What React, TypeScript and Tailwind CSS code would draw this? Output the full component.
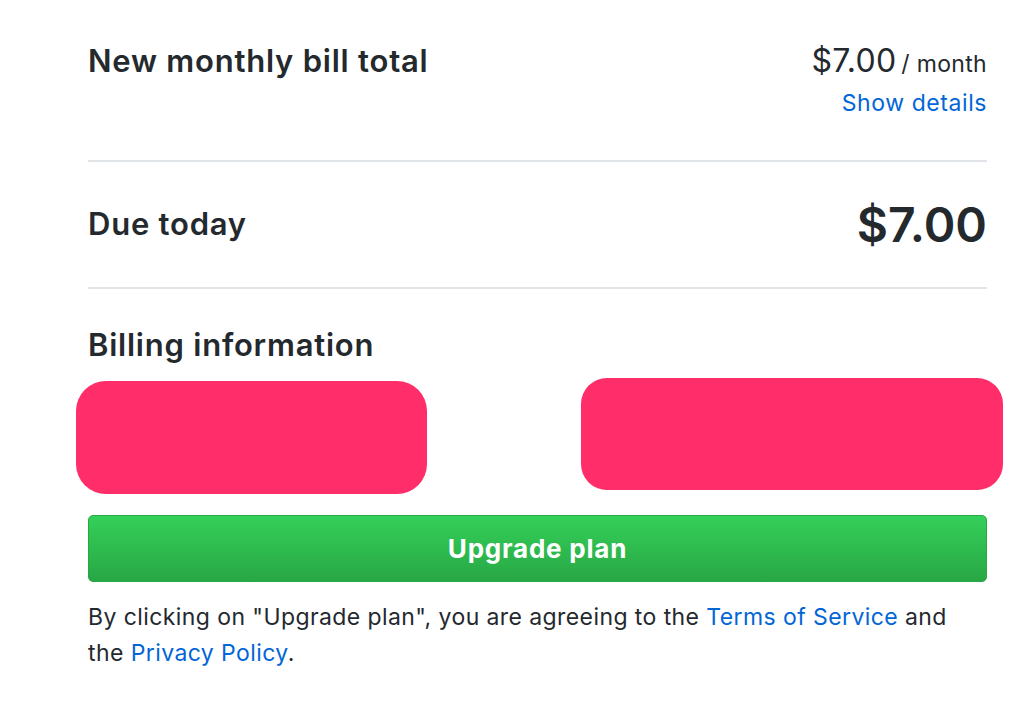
export default function App() {
  return (
    <div
      className="min-h-[726px] w-[1026px] bg-white text-[#24292e]"
      style={{ fontFamily: "Inter, 'Noto Sans', sans-serif" }}
    >
      <div className="ml-[88px] w-[899px] pt-[40px]">
        {/* monthly total */}
        <div className="flex items-start justify-between pb-[41px]">
          <h2 className="text-[31px] font-semibold leading-[42px] tracking-[0.025em]">
            New monthly bill total
          </h2>
          <div className="flex flex-col items-end">
            <p className="leading-[42px] tracking-[0.02em]">
              <span className="text-[32px]">$7.00</span>{" "}
              <span className="text-[23px]">/ month</span>
            </p>
            <a href="#" className="text-[23px] leading-[32px] tracking-[0.025em] text-[#0366d6]">
              Show details
            </a>
          </div>
        </div>
        <hr className="border-t-2 border-[#e1e4e8]" />

        {/* due today */}
        <div className="flex h-[125px] items-center justify-between">
          <h2 className="text-[31px] font-semibold tracking-[0.025em]">Due today</h2>
          <span className="text-[48px] font-semibold">$7.00</span>
        </div>
        <hr className="border-t-2 border-[#e1e4e8]" />

        <h2 className="mt-[36px] text-[31px] font-semibold leading-[40px] tracking-[0.025em]">
          Billing information
        </h2>

        {/* redacted fields */}
        <div className="-ml-[12px] mt-[13px] flex w-[927px] items-start justify-between">
          <div className="mt-[3px] h-[113px] w-[351px] rounded-[30px] bg-[#ff2e6a]" />
          <div className="h-[112px] w-[422px] rounded-[26px] bg-[#ff2e6a]" />
        </div>

        <button
          type="button"
          className="mt-[21px] flex h-[67px] w-full items-center justify-center rounded-[5px] border border-[#28a745] bg-gradient-to-b from-[#34d058] to-[#28a745] text-[26px] font-bold tracking-[0.03em] text-white"
        >
          Upgrade plan
        </button>

        <p className="mt-[17px] text-[23px] leading-[36px] tracking-[0.018em]">
          By clicking on "Upgrade plan", you are agreeing to the{" "}
          <a href="#" className="text-[#0366d6]">Terms of Service</a> and the{" "}
          <a href="#" className="text-[#0366d6]">Privacy Policy</a>.
        </p>
      </div>
    </div>
  );
}
